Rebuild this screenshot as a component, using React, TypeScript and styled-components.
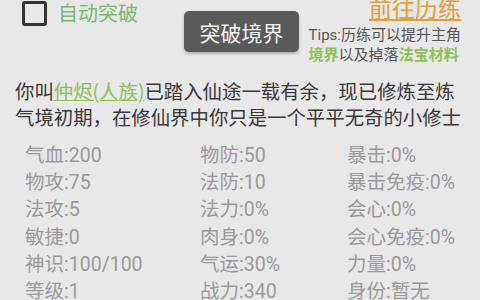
import React from "react";
import styled, { createGlobalStyle } from "styled-components";

const GlobalStyle = createGlobalStyle`
  html, body {
    margin: 0;
    padding: 0;
    background: #e8e8e8;
  }
  body {
    width: 480px;
    height: 300px;
    overflow: hidden;
    font-family: Roboto, "Noto Sans CJK SC", sans-serif;
  }
`;

interface Stat {
  label: string;
  value: string;
}

const stats: Stat[] = [
  { label: "气血", value: "200" },
  { label: "物防", value: "50" },
  { label: "暴击", value: "0%" },
  { label: "物攻", value: "75" },
  { label: "法防", value: "10" },
  { label: "暴击免疫", value: "0%" },
  { label: "法攻", value: "5" },
  { label: "法力", value: "0%" },
  { label: "会心", value: "0%" },
  { label: "敏捷", value: "0" },
  { label: "肉身", value: "0%" },
  { label: "会心免疫", value: "0%" },
  { label: "神识", value: "100/100" },
  { label: "气运", value: "30%" },
  { label: "力量", value: "0%" },
  { label: "等级", value: "1" },
  { label: "战力", value: "340" },
  { label: "身份", value: "暂无" },
];

const App: React.FC = () => (
  <Page>
    <GlobalStyle />
    <TopRow>
      <AutoToggle>
        <CheckBox />
        <AutoLabel>自动突破</AutoLabel>
      </AutoToggle>
      <BreakButton>突破境界</BreakButton>
      <TrainBlock>
        <TrainLink>前往历练</TrainLink>
        <Tips>
          Tips:历练可以提升主角
          <br />
          <Hint>境界</Hint>以及掉落<Hint>法宝材料</Hint>
        </Tips>
      </TrainBlock>
    </TopRow>
    <Story>
      你叫<Name>仲烬(人族)</Name>已踏入仙途一载有余，现已修炼至炼
      <br />
      气境初期，在修仙界中你只是一个平平无奇的小修士
    </Story>
    <StatGrid>
      {stats.map((stat) => (
        <StatItem key={stat.label}>
          {stat.label}:{stat.value}
        </StatItem>
      ))}
    </StatGrid>
  </Page>
);

const Page = styled.div`
  width: 480px;
  height: 300px;
  display: flex;
  flex-direction: column;
  overflow: hidden;
`;

const TopRow = styled.div`
  display: grid;
  grid-template-columns: 1fr auto 1fr;
  align-items: start;
  padding: 0 19px 0 22px;
  height: 66px;
`;

const AutoToggle = styled.label`
  display: flex;
  align-items: center;
  gap: 11px;
  margin-top: 1px;
`;

const CheckBox = styled.span`
  width: 19px;
  height: 19px;
  border: 3px solid #333;
  border-radius: 3px;
  box-sizing: content-box;
`;

const AutoLabel = styled.span`
  font-size: 20px;
  line-height: 24px;
  color: #7ab86c;
`;

const BreakButton = styled.button`
  margin-top: 11px;
  width: 115px;
  height: 41px;
  border: none;
  border-radius: 5px;
  background: #5a5a5a;
  color: #f4f4f4;
  font-family: Roboto, "Noto Sans CJK SC", sans-serif;
  font-size: 21px;
  box-shadow: 0 2px 3px rgba(0, 0, 0, 0.25);
  padding: 0;
`;

const TrainBlock = styled.div`
  justify-self: end;
  display: flex;
  flex-direction: column;
  align-items: flex-end;
`;

const TrainLink = styled.a`
  font-size: 23px;
  line-height: 23px;
  margin-top: -2px;
  color: #e09d3c;
  text-decoration: underline;
  text-underline-offset: 2px;
`;

const Tips = styled.div`
  margin-top: 4px;
  font-size: 15px;
  line-height: 20px;
  color: #555;
  text-align: left;
`;

const Hint = styled.span`
  color: #8cc152;
  font-weight: bold;
`;

const Story = styled.p`
  margin: 13px 0 0;
  padding-left: 15px;
  font-family: "Noto Sans CJK SC", sans-serif;
  font-size: 19.4px;
  line-height: 26px;
  color: #383838;
  white-space: nowrap;
`;

const Name = styled.span`
  color: #8cc152;
  text-decoration: underline;
`;

const StatGrid = styled.div`
  display: grid;
  grid-template-columns: 175px 147px auto;
  grid-auto-rows: 27.2px;
  padding-left: 25px;
  margin-top: 12px;
`;

const StatItem = styled.div`
  font-size: 19.5px;
  line-height: 27.2px;
  color: #9a9a9a;
  white-space: nowrap;
`;

export default App;
